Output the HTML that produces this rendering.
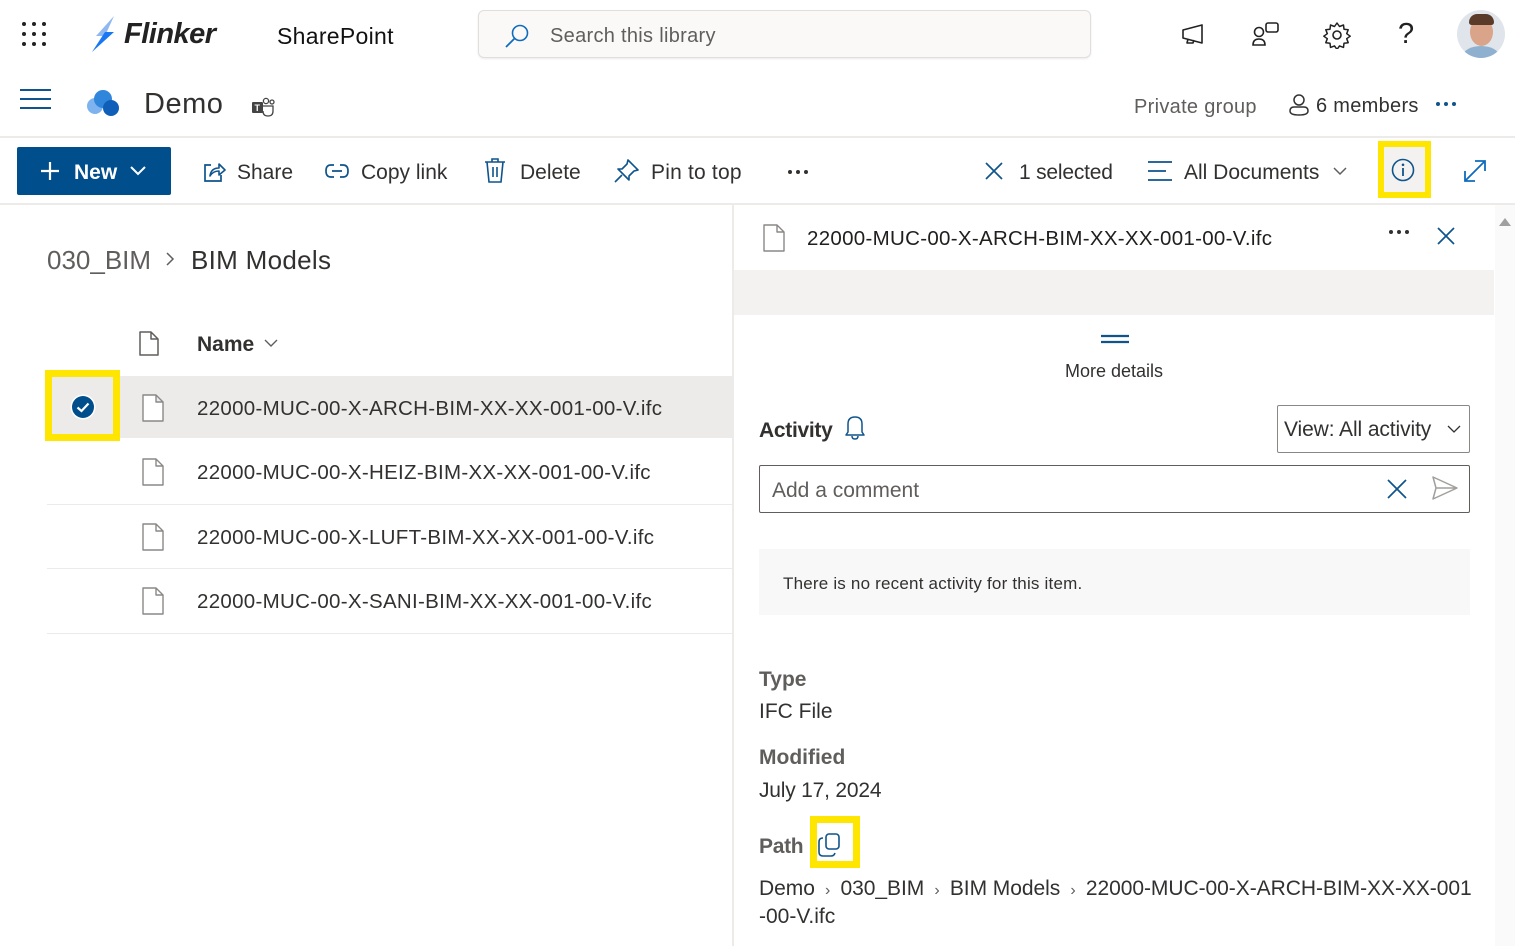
<!DOCTYPE html>
<html><head><meta charset="utf-8"><style>
*{box-sizing:border-box;margin:0;padding:0}
body{width:1515px;height:946px;overflow:hidden;background:#fff;font-family:"Liberation Sans",sans-serif;color:#323130;position:relative}
.a{position:absolute;white-space:nowrap}
.ic{position:absolute}
svg{display:block}
.fn{font-size:20.5px;letter-spacing:.3px}
</style></head><body>
<svg class="ic" style="left:22px;top:22px" width="24" height="24"><g fill="#222"><circle cx="2" cy="2" r="2"/><circle cx="12" cy="2" r="2"/><circle cx="22" cy="2" r="2"/><circle cx="2" cy="12" r="2"/><circle cx="12" cy="12" r="2"/><circle cx="22" cy="12" r="2"/><circle cx="2" cy="22" r="2"/><circle cx="12" cy="22" r="2"/><circle cx="22" cy="22" r="2"/></g></svg>
<svg class="ic" style="left:92px;top:16px" width="26" height="36"><path d="M22 0 L4 20 L13 20 Z" fill="#8fb8f0"/><path d="M13 16 L22 16 L0 36 Z" fill="#1877f2"/></svg>
<div class="a" style="left:124px;top:18px;font-size:29px;font-weight:bold;font-style:italic;color:#222;letter-spacing:-.5px">Flinker</div>
<div class="a" style="left:277px;top:23px;font-size:23px;color:#111;letter-spacing:.3px">SharePoint</div>
<div class="a" style="left:478px;top:10px;width:613px;height:48px;border:1px solid #e1dfdd;border-radius:6px;background:#faf9f8;box-shadow:0 1px 2px rgba(0,0,0,.08)"></div>
<svg class="ic" style="left:504px;top:23px" width="26" height="26"><circle cx="16" cy="10" r="7.5" fill="none" stroke="#0f6cbd" stroke-width="1.6"/><path d="M10.5 15.5 L2 24" stroke="#0f6cbd" stroke-width="1.8"/></svg>
<div class="a" style="left:550px;top:25px;font-size:20px;color:#605e5c;letter-spacing:.3px">Search this library</div>
<svg class="ic" style="left:1180px;top:22px" width="26" height="24"><path d="M3 8 L22 3 L22 21 L3 16 Z M8 17 L7 21 L13 21 L14 18" fill="none" stroke="#222" stroke-width="1.6" stroke-linejoin="round"/></svg>
<svg class="ic" style="left:1252px;top:20px" width="28" height="28"><circle cx="7" cy="12" r="4.5" fill="none" stroke="#222" stroke-width="1.6"/><path d="M1 25 Q1 19 7 19 Q13 19 13 25 Z" fill="none" stroke="#222" stroke-width="1.6"/><rect x="14" y="3" width="12" height="9" rx="2" fill="none" stroke="#222" stroke-width="1.6"/></svg>
<svg class="ic" style="left:1323px;top:21px" width="28" height="28"><circle cx="14" cy="14" r="4" fill="none" stroke="#222" stroke-width="1.6"/><path d="M14 2 l2.5 3.5 4-1.5 .5 4.2 4.2.5 -1.5 4 3.5 2.5 -3.5 2.5 1.5 4 -4.2.5 -.5 4.2 -4-1.5 -2.5 3.5 -2.5-3.5 -4 1.5 -.5-4.2 -4.2-.5 1.5-4 -3.5-2.5 3.5-2.5 -1.5-4 4.2-.5 .5-4.2 4 1.5Z" fill="none" stroke="#222" stroke-width="1.5" stroke-linejoin="round"/></svg>
<div class="a" style="left:1398px;top:18px;font-size:29px;color:#222;font-weight:300">?</div>
<div class="a" style="left:1457px;top:10px;width:48px;height:48px;border-radius:50%;overflow:hidden;background:#dfe5ea">
<div style="position:absolute;left:13px;top:8px;width:23px;height:28px;border-radius:50%;background:#d9a489"></div>
<div style="position:absolute;left:12px;top:4px;width:25px;height:11px;border-radius:12px 12px 4px 4px;background:#5a3a28"></div>
<div style="position:absolute;left:6px;top:36px;width:36px;height:20px;border-radius:50%;background:#8fb0cf"></div></div>
<svg class="ic" style="left:20px;top:89px" width="31" height="22"><path d="M0 1H31M0 10H31M0 19H31" stroke="#0f548c" stroke-width="2"/></svg>
<svg class="ic" style="left:85px;top:89px" width="36" height="28"><circle cx="10" cy="17" r="8" fill="#7fb3f0"/><circle cx="18" cy="10" r="9" fill="#2f86db"/><circle cx="26" cy="19" r="8" fill="#0f5fb8"/></svg>
<div class="a" style="left:144px;top:88px;font-size:29px;color:#323130;letter-spacing:.5px">Demo</div>
<svg class="ic" style="left:251px;top:97px" width="24" height="20"><rect x="1" y="5" width="11" height="11" rx="1" fill="#444"/><text x="3.5" y="14" font-size="9" fill="#fff" font-family="Liberation Sans" font-weight="bold">T</text><circle cx="15" cy="4" r="2.6" fill="none" stroke="#444" stroke-width="1.3"/><circle cx="21" cy="5" r="2" fill="none" stroke="#444" stroke-width="1.3"/><path d="M12 9H22V14Q22 19 17 19Q12 19 12 14" fill="none" stroke="#444" stroke-width="1.3"/></svg>
<div class="a" style="left:1134px;top:96px;font-size:20px;color:#605e5c;letter-spacing:.3px">Private group</div>
<svg class="ic" style="left:1288px;top:93px" width="22" height="24"><circle cx="11" cy="7" r="5" fill="none" stroke="#323130" stroke-width="1.5"/><path d="M2 18 Q2 14 6 14H16Q20 14 20 18Q20 22 11 22Q2 22 2 18Z" fill="none" stroke="#323130" stroke-width="1.5"/></svg>
<div class="a" style="left:1316px;top:95px;font-size:20px;color:#323130;letter-spacing:.3px">6 members</div>
<svg class="ic" style="left:1435px;top:101px" width="22" height="6"><g fill="#0f548c"><circle cx="3" cy="3" r="2"/><circle cx="11" cy="3" r="2"/><circle cx="19" cy="3" r="2"/></g></svg>
<div class="a" style="left:0;top:136px;width:1515px;height:2px;background:#edebe9"></div>
<div class="a" style="left:17px;top:147px;width:154px;height:48px;background:#004e8c;border-radius:2px"></div>
<svg class="ic" style="left:40px;top:161px" width="20" height="20"><path d="M10 1V19M1 10H19" stroke="#fff" stroke-width="2.2"/></svg>
<div class="a" style="left:74px;top:161px;font-size:21px;font-weight:bold;color:#fff">New</div>
<svg class="ic" style="left:130px;top:166px" width="16" height="10"><path d="M1 1L8 8L15 1" fill="none" stroke="#fff" stroke-width="2"/></svg>
<svg class="ic" style="left:202px;top:160px" width="24" height="24"><path d="M9 5H3V21H19V15" fill="none" stroke="#0f548c" stroke-width="1.7"/><path d="M8 16Q9 8 17 8V4L23 10L17 15V11Q11 11 8 16Z" fill="none" stroke="#0f548c" stroke-width="1.6" stroke-linejoin="round"/></svg>
<div class="a" style="left:237px;top:161px;font-size:21px">Share</div>
<svg class="ic" style="left:325px;top:163px" width="24" height="16"><path d="M9 2H6Q1 2 1 8Q1 14 6 14H9M15 2H18Q23 2 23 8Q23 14 18 14H15M7 8H17" fill="none" stroke="#0f548c" stroke-width="1.7"/></svg>
<div class="a" style="left:361px;top:161px;font-size:21px">Copy link</div>
<svg class="ic" style="left:484px;top:158px" width="22" height="26"><path d="M1 4H21M8 4V1H14V4M3 4L5 24H17L19 4M9 9V19M13 9V19" fill="none" stroke="#0f548c" stroke-width="1.6"/></svg>
<div class="a" style="left:520px;top:161px;font-size:21px">Delete</div>
<svg class="ic" style="left:614px;top:158px" width="26" height="26"><path d="M14 2L24 12L20 13L15 18L15 22L4 11L8 11L13 6Z M8 17L1 24" fill="none" stroke="#0f548c" stroke-width="1.6" stroke-linejoin="round"/></svg>
<div class="a" style="left:651px;top:161px;font-size:21px;letter-spacing:.2px">Pin to top</div>
<svg class="ic" style="left:787px;top:169px" width="22" height="6"><g fill="#323130"><circle cx="3" cy="3" r="2"/><circle cx="11" cy="3" r="2"/><circle cx="19" cy="3" r="2"/></g></svg>
<svg class="ic" style="left:985px;top:162px" width="18" height="18"><path d="M1 1L17 17M17 1L1 17" stroke="#0f548c" stroke-width="1.7"/></svg>
<div class="a" style="left:1019px;top:161px;font-size:21px;letter-spacing:-.2px">1 selected</div>
<svg class="ic" style="left:1147px;top:160px" width="26" height="22"><path d="M1 2H25M1 11H19M1 20H25" stroke="#0f548c" stroke-width="1.7"/></svg>
<div class="a" style="left:1184px;top:161px;font-size:21px">All Documents</div>
<svg class="ic" style="left:1333px;top:167px" width="14" height="9"><path d="M1 1L7 7L13 1" fill="none" stroke="#605e5c" stroke-width="1.5"/></svg>
<div class="a" style="left:1378px;top:141px;width:53px;height:57px;border:6px solid #ffe600;background:#f3f2f1"></div>
<svg class="ic" style="left:1391px;top:158px" width="24" height="24"><circle cx="12" cy="12" r="10.5" fill="none" stroke="#0f548c" stroke-width="1.6"/><path d="M12 10V18" stroke="#0f548c" stroke-width="1.8"/><circle cx="12" cy="6.8" r="1.3" fill="#0f548c"/></svg>
<svg class="ic" style="left:1463px;top:159px" width="24" height="24"><path d="M2 22L22 2M12 2H22V12M2 12V22H12" fill="none" stroke="#0f6cbd" stroke-width="1.8"/></svg>
<div class="a" style="left:0;top:203px;width:1515px;height:2px;background:#edebe9"></div>
<div class="a" style="left:47px;top:245px;font-size:26px;color:#605e5c">030_BIM</div>
<svg class="ic" style="left:165px;top:252px" width="10" height="14"><path d="M2 1L8 7L2 13" fill="none" stroke="#605e5c" stroke-width="1.5"/></svg>
<div class="a" style="left:191px;top:245px;font-size:26px;color:#323130;letter-spacing:.3px">BIM Models</div>
<svg class="ic" style="left:139px;top:331px" width="20" height="25"><path d="M1 1H12L19 8V24H1Z M12 1V8H19" fill="none" stroke="#605e5c" stroke-width="1.5" stroke-linejoin="round"/></svg>
<div class="a" style="left:197px;top:333px;font-size:21px;font-weight:bold">Name</div>
<svg class="ic" style="left:264px;top:339px" width="14" height="9"><path d="M1 1L7 7L13 1" fill="none" stroke="#605e5c" stroke-width="1.4"/></svg>
<div class="a" style="left:120px;top:376px;width:613px;height:62px;background:#edebe9"></div>
<div class="a" style="left:45px;top:370px;width:75px;height:71px;border:7px solid #ffe600;background:#edebe9"></div>
<svg class="ic" style="left:70px;top:394px" width="26" height="26"><circle cx="13" cy="13" r="12.5" fill="#fff"/><circle cx="13" cy="13" r="11" fill="#004e8c"/><path d="M7.5 13.5L11.5 17L18.5 9.5" fill="none" stroke="#fff" stroke-width="2.2"/></svg>
<svg class="ic" style="left:142px;top:394px" width="22" height="28"><path d="M1 1H14L21 8V27H1Z M14 1V8H21" fill="#fff" stroke="#8a8886" stroke-width="1.4" stroke-linejoin="round"/></svg>
<div class="a fn" style="left:197px;top:397px">22000-MUC-00-X-ARCH-BIM-XX-XX-001-00-V.ifc</div>
<svg class="ic" style="left:142px;top:458px" width="22" height="28"><path d="M1 1H14L21 8V27H1Z M14 1V8H21" fill="#fff" stroke="#8a8886" stroke-width="1.4" stroke-linejoin="round"/></svg>
<div class="a fn" style="left:197px;top:461px">22000-MUC-00-X-HEIZ-BIM-XX-XX-001-00-V.ifc</div>
<div class="a" style="left:47px;top:504px;width:686px;height:1px;background:#edebe9"></div>
<svg class="ic" style="left:142px;top:523px" width="22" height="28"><path d="M1 1H14L21 8V27H1Z M14 1V8H21" fill="#fff" stroke="#8a8886" stroke-width="1.4" stroke-linejoin="round"/></svg>
<div class="a fn" style="left:197px;top:526px">22000-MUC-00-X-LUFT-BIM-XX-XX-001-00-V.ifc</div>
<div class="a" style="left:47px;top:568px;width:686px;height:1px;background:#edebe9"></div>
<svg class="ic" style="left:142px;top:587px" width="22" height="28"><path d="M1 1H14L21 8V27H1Z M14 1V8H21" fill="#fff" stroke="#8a8886" stroke-width="1.4" stroke-linejoin="round"/></svg>
<div class="a fn" style="left:197px;top:590px">22000-MUC-00-X-SANI-BIM-XX-XX-001-00-V.ifc</div>
<div class="a" style="left:47px;top:633px;width:686px;height:1px;background:#edebe9"></div>
<div class="a" style="left:732px;top:205px;width:2px;height:741px;background:#edebe9"></div>
<div class="a" style="left:1495px;top:205px;width:20px;height:741px;background:#fafafa"></div>
<svg class="ic" style="left:1498px;top:217px" width="14" height="10"><path d="M7 1L13 9H1Z" fill="#a0a0a0"/></svg>
<svg class="ic" style="left:763px;top:224px" width="22" height="28"><path d="M1 1H14L21 8V27H1Z M14 1V8H21" fill="#fff" stroke="#8a8886" stroke-width="1.4" stroke-linejoin="round"/></svg>
<div class="a fn" style="left:807px;top:227px;color:#201f1e">22000-MUC-00-X-ARCH-BIM-XX-XX-001-00-V.ifc</div>
<svg class="ic" style="left:1388px;top:229px" width="22" height="6"><g fill="#323130"><circle cx="3" cy="3" r="2"/><circle cx="11" cy="3" r="2"/><circle cx="19" cy="3" r="2"/></g></svg>
<svg class="ic" style="left:1437px;top:227px" width="18" height="18"><path d="M1 1L17 17M17 1L1 17" stroke="#0f548c" stroke-width="1.7"/></svg>
<div class="a" style="left:734px;top:270px;width:760px;height:45px;background:#f3f2f1"></div>
<svg class="ic" style="left:1101px;top:334px" width="28" height="10"><path d="M0 2H28M0 8H28" stroke="#0f548c" stroke-width="2.2"/></svg>
<div class="a" style="left:1065px;top:361px;font-size:18px">More details</div>
<div class="a" style="left:759px;top:419px;font-size:21px;font-weight:bold;letter-spacing:-.3px">Activity</div>
<svg class="ic" style="left:844px;top:414px" width="22" height="26"><path d="M4 18V10Q4 3 11 3Q18 3 18 10V18L20 21H2Z M8 22Q8 25 11 25Q14 25 14 22" fill="none" stroke="#0f548c" stroke-width="1.5" stroke-linejoin="round"/></svg>
<div class="a" style="left:1277px;top:405px;width:193px;height:48px;border:1px solid #8a8886;border-radius:2px"></div>
<div class="a" style="left:1284px;top:418px;font-size:21px;letter-spacing:-.1px">View: All activity</div>
<svg class="ic" style="left:1447px;top:425px" width="14" height="9"><path d="M1 1L7 7L13 1" fill="none" stroke="#323130" stroke-width="1.3"/></svg>
<div class="a" style="left:759px;top:465px;width:711px;height:48px;border:1px solid #605e5c;border-radius:2px"></div>
<div class="a" style="left:772px;top:479px;font-size:21px;color:#605e5c">Add a comment</div>
<svg class="ic" style="left:1387px;top:479px" width="20" height="20"><path d="M1 1L19 19M19 1L1 19" stroke="#0f548c" stroke-width="1.7"/></svg>
<svg class="ic" style="left:1432px;top:476px" width="26" height="24"><path d="M1 1L25 12L1 23L4 12Z M4 12H25" fill="none" stroke="#a19f9d" stroke-width="1.5" stroke-linejoin="round"/></svg>
<div class="a" style="left:759px;top:549px;width:711px;height:66px;background:#f8f8f8"></div>
<div class="a" style="left:783px;top:574px;font-size:17px;letter-spacing:.2px">There is no recent activity for this item.</div>
<div class="a" style="left:759px;top:668px;font-size:21px;font-weight:bold;color:#605e5c">Type</div>
<div class="a" style="left:759px;top:700px;font-size:21px">IFC File</div>
<div class="a" style="left:759px;top:746px;font-size:21px;font-weight:bold;color:#605e5c">Modified</div>
<div class="a" style="left:759px;top:779px;font-size:21px;letter-spacing:-.2px">July 17, 2024</div>
<div class="a" style="left:759px;top:835px;font-size:21px;font-weight:bold;color:#605e5c;letter-spacing:-.3px">Path</div>
<div class="a" style="left:810px;top:816px;width:50px;height:52px;border:7px solid #ffe600"></div>
<svg class="ic" style="left:818px;top:833px" width="24" height="24"><rect x="8" y="1" width="13" height="15" rx="3" fill="none" stroke="#0f548c" stroke-width="1.6"/><path d="M5 5Q1 5 1 9V19Q1 23 5 23H13Q16 23 17 20" fill="none" stroke="#0f548c" stroke-width="1.6"/></svg>
<div class="a" style="left:759px;top:877px;font-size:21px;letter-spacing:-.05px">Demo <span style="color:#605e5c;font-size:16px">&nbsp;›&nbsp;</span> 030_BIM <span style="color:#605e5c;font-size:16px">&nbsp;›&nbsp;</span> BIM Models <span style="color:#605e5c;font-size:16px">&nbsp;›&nbsp;</span> 22000-MUC-00-X-ARCH-BIM-XX-XX-001</div>
<div class="a" style="left:759px;top:905px;font-size:21px">-00-V.ifc</div>
</body></html>
